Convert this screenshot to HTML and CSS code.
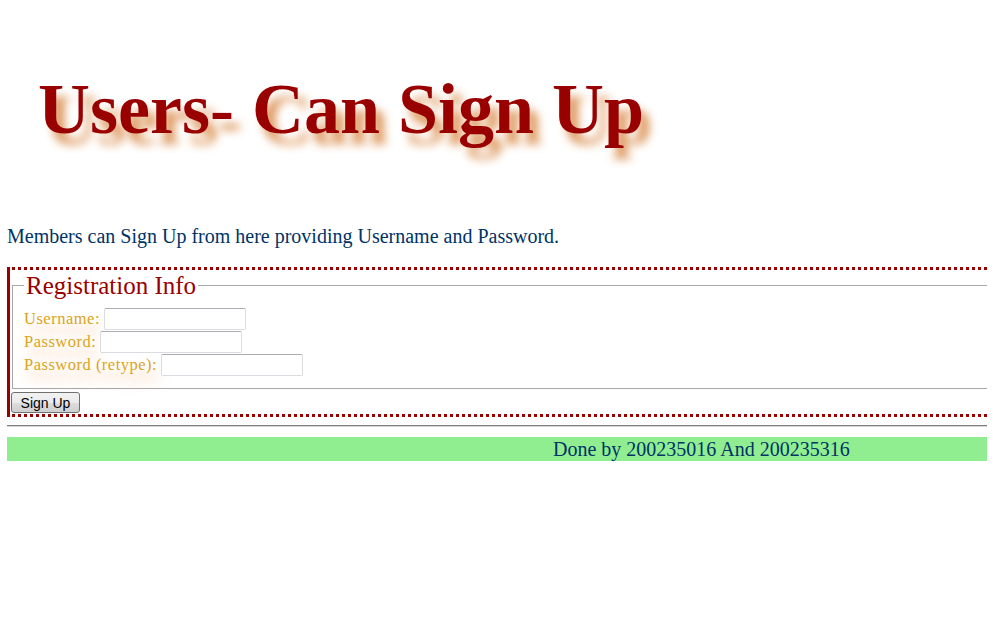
FILE: index.html
```html
<!DOCTYPE html>
<html>
<head>
<meta charset="utf-8">
<title>Users- Can Sign Up</title>
<link rel="stylesheet" href="styles.css">
</head>
<body>
<h1 class="title">Users- Can Sign Up</h1>
<p class="intro">Members can Sign Up from here providing Username and Password.</p>
<form class="signup">
  <fieldset class="info">
    <legend class="legend">Registration Info</legend>
    <div class="row"><label class="lbl">Username:</label><input class="field" type="text"></div>
    <div class="row"><label class="lbl">Password:</label><input class="field" type="password"></div>
    <div class="row"><label class="lbl">Password (retype):</label><input class="field" type="password"></div>
  </fieldset>
  <button class="btn" type="button">Sign Up</button>
</form>
<hr class="rule">
<div class="footer">Done by 200235016 And 200235316</div>
</body>
</html>
```
FILE: styles.css
```css
html, body {
  background: #ffffff;
}
body {
  margin: 0 0 0 7px;
  width: 980px;
  font-family: "Liberation Serif", "Times New Roman", serif;
  color: #003366;
}
.title {
  margin: 69px 0 0 0;
  padding-left: 31px;
  font-family: "Liberation Serif", "Times New Roman", serif;
  font-weight: bold;
  font-size: 72px;
  line-height: 80px;
  color: #990000;
  text-shadow: 8px 11px 10px #dc9458;
}
.intro {
  margin: 76px 0 0 0;
  font-size: 20px;
  line-height: 23px;
  color: #003366;
}
.signup {
  margin: 19px 0 0 0;
  border-left: 3px solid #990000;
  border-top: 3px dotted #990000;
  border-bottom: 3px dotted #990000;
  padding: 0 0 1px 0;
}
.info {
  margin: 0 0 0 2px;
  padding: 6px 11px 12px 11px;
  border: 1px solid #a8a8a8;
  border-right: none;
  min-width: 0;
}
.legend {
  padding: 0 2px;
  font-family: "Liberation Serif", "Times New Roman", serif;
  font-size: 25px;
  line-height: 31px;
  color: #990000;
}
.row {
  display: flex;
  align-items: center;
  height: 23px;
}
.lbl {
  font-family: "Liberation Serif", "Times New Roman", serif;
  font-size: 16.5px;
  letter-spacing: 0.5px;
  color: goldenrod;
  text-shadow: 5px 10px 12px rgba(235, 160, 95, 0.55);
}
.field {
  box-sizing: border-box;
  width: 142px;
  height: 22px;
  margin: 0 0 0 4px;
  padding: 1px 3px;
  border: 1px solid #dadce2;
  border-top-color: #abadb3;
  border-radius: 2px;
  background: #ffffff;
  font-family: "Liberation Sans", Arial, sans-serif;
  font-size: 13px;
}
.btn {
  display: block;
  box-sizing: border-box;
  width: 69px;
  height: 21px;
  margin: 3px 0 0 1px;
  padding: 0;
  border: 1px solid #707070;
  border-radius: 3px;
  background: linear-gradient(#f2f2f2 0%, #ebebeb 50%, #dddddd 51%, #cfcfcf 100%);
  font-family: "Liberation Sans", Arial, sans-serif;
  font-size: 14px;
  color: #000000;
}
.rule {
  margin: 8px 0 10px 0;
  height: 0;
  border: none;
  border-top: 1px solid #7a7a7a;
  border-bottom: 1px solid #d8d8d8;
}
.footer {
  height: 24px;
  padding-left: 546px;
  background: #90ee90;
  font-size: 20px;
  line-height: 24px;
  color: #003366;
}
```
